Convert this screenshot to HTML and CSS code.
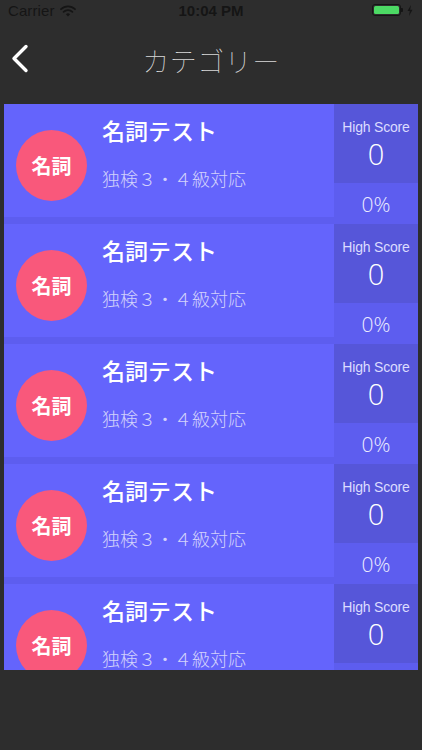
FILE: index.html
```html
<!DOCTYPE html>
<html lang="ja">
<head>
<meta charset="utf-8">
<link rel="stylesheet" href="styles.css">
</head>
<body>
<div class="screen">
  <div class="status">
    <div class="st-left">
      <span class="carrier">Carrier</span>
      <svg class="wifi" width="16" height="12" viewBox="0 0 16 12">
        <path d="M1 4.2 A10 10 0 0 1 15 4.2" fill="none" stroke="#151515" stroke-width="1.8" stroke-linecap="round"/>
        <path d="M3.6 6.8 A6.4 6.4 0 0 1 12.4 6.8" fill="none" stroke="#151515" stroke-width="1.8" stroke-linecap="round"/>
        <path d="M8 11.4 L5.9 9.2 A3 3 0 0 1 10.1 9.2 Z" fill="#151515"/>
      </svg>
    </div>
    <div class="time">10:04 PM</div>
    <div class="st-right">
      <span class="battery"><span class="fill"></span></span>
      <span class="nub"></span>
      <svg class="bolt" width="6" height="11" viewBox="0 0 6 11"><path d="M4 0 L0.5 6 L2.8 6 L2 11 L5.5 4.8 L3.2 4.8 Z" fill="#151515"/></svg>
    </div>
  </div>
  <div class="nav">
    <svg class="back" width="20" height="30" viewBox="0 0 20 30"><path d="M16 2.5 L4 14.5 L16 26.5" fill="none" stroke="#ffffff" stroke-width="3.4" stroke-linecap="round" stroke-linejoin="round"/></svg>
    <div class="title">カテゴリー</div>
  </div>
  <div class="list">
    <div class="row">
      <div class="main">
        <div class="badge">名詞</div>
        <div class="texts">
          <div class="name">名詞テスト</div>
          <div class="sub">独検３・４級対応</div>
        </div>
      </div>
      <div class="side">
        <div class="hs"><div class="hs-label">High Score</div><div class="hs-val">0</div></div>
        <div class="pct">0%</div>
      </div>
    </div>
    <div class="row">
      <div class="main">
        <div class="badge">名詞</div>
        <div class="texts">
          <div class="name">名詞テスト</div>
          <div class="sub">独検３・４級対応</div>
        </div>
      </div>
      <div class="side">
        <div class="hs"><div class="hs-label">High Score</div><div class="hs-val">0</div></div>
        <div class="pct">0%</div>
      </div>
    </div>
    <div class="row">
      <div class="main">
        <div class="badge">名詞</div>
        <div class="texts">
          <div class="name">名詞テスト</div>
          <div class="sub">独検３・４級対応</div>
        </div>
      </div>
      <div class="side">
        <div class="hs"><div class="hs-label">High Score</div><div class="hs-val">0</div></div>
        <div class="pct">0%</div>
      </div>
    </div>
    <div class="row">
      <div class="main">
        <div class="badge">名詞</div>
        <div class="texts">
          <div class="name">名詞テスト</div>
          <div class="sub">独検３・４級対応</div>
        </div>
      </div>
      <div class="side">
        <div class="hs"><div class="hs-label">High Score</div><div class="hs-val">0</div></div>
        <div class="pct">0%</div>
      </div>
    </div>
    <div class="row">
      <div class="main">
        <div class="badge">名詞</div>
        <div class="texts">
          <div class="name">名詞テスト</div>
          <div class="sub">独検３・４級対応</div>
        </div>
      </div>
      <div class="side">
        <div class="hs"><div class="hs-label">High Score</div><div class="hs-val">0</div></div>
        <div class="pct"></div>
      </div>
    </div>
  </div>
</div>
</body>
</html>
```
FILE: styles.css
```css
* { box-sizing: border-box; }
html, body { margin: 0; padding: 0; }
body {
  background: #2d2d2d;
  font-family: "Liberation Sans", "Noto Sans CJK JP", sans-serif;
  width: 422px;
  height: 750px;
  overflow: hidden;
}
.screen { width: 422px; height: 750px; display: flex; flex-direction: column; }

.status {
  height: 20px;
  display: grid;
  grid-template-columns: 1fr auto 1fr;
  align-items: center;
  padding: 0 8px;
  color: #151515;
}
.st-left { display: flex; align-items: center; gap: 5px; }
.carrier { font-size: 15px; letter-spacing: 0.1px; }
.wifi { margin-top: 1px; }
.time { font-size: 15px; font-weight: bold; text-align: center; }
.st-right { display: flex; align-items: center; justify-content: flex-end; }
.battery {
  width: 29px; height: 12px;
  border: 1px solid #151515;
  border-radius: 3px;
  padding: 1px;
  display: flex;
}
.battery .fill { flex: 1; background: #4cd964; border-radius: 1.5px; }
.nub { width: 2px; height: 4px; background: #151515; border-radius: 0 1px 1px 0; margin-right: 4px; }
.bolt { margin-right: 1px; }

.nav {
  height: 74px;
  margin-bottom: 10px;
  display: grid;
  grid-template-columns: 1fr auto 1fr;
  align-items: center;
  padding: 0 10px;
}
.back { display: block; margin-top: 3px; }
.title {
  grid-column: 2;
  font-family: "Noto Sans CJK JP", sans-serif;
  font-weight: 100;
  font-size: 27px;
  color: #d8d8d8;
  margin-top: 6px;
  letter-spacing: 0.5px;
}

.list {
  margin: 0 4px;
  height: 566px;
  overflow: hidden;
  display: flex;
  flex-direction: column;
}
.row {
  flex: 0 0 120px;
  display: grid;
  grid-template-columns: 330px 84px;
  background: #5d5def;
}
.main {
  height: 113px;
  background: #6464fc;
  display: flex;
  align-items: flex-start;
  padding-left: 12px;
}
.badge {
  width: 71px; height: 71px;
  margin-top: 26px;
  border-radius: 50%;
  background: #f9587b;
  color: #ffffff;
  display: flex; align-items: center; justify-content: center;
  font-family: "Noto Sans CJK JP", sans-serif;
  font-weight: bold;
  font-size: 20px;
  flex: none;
}
.texts { margin-left: 15px; display: flex; flex-direction: column; }
.name {
  font-family: "Noto Sans CJK JP", sans-serif;
  font-size: 23px;
  line-height: 28px;
  color: #ffffff;
  margin-top: 12px;
  font-weight: 500;
}
.sub {
  font-family: "Noto Sans CJK JP", sans-serif;
  font-size: 18px;
  line-height: 24px;
  color: #d2d2fb;
  margin-top: 22px;
  font-weight: 300;
}
.side { display: grid; grid-template-rows: 79px 41px; }
.hs {
  background: #5656d9;
  display: flex; flex-direction: column; align-items: center;
  padding-top: 14px;
}
.hs-label { font-size: 14px; line-height: 18px; color: #dcdcff; letter-spacing: -0.2px; }
.hs-val { font-family: "Open Sans", sans-serif; font-weight: 300; font-size: 29px; line-height: 34px; color: #ffffff; margin-top: 1px; }
.pct {
  display: flex; align-items: center; justify-content: center;
  font-family: "Open Sans", sans-serif; font-weight: 300;
  font-size: 21px; color: #ececff;
}
```
